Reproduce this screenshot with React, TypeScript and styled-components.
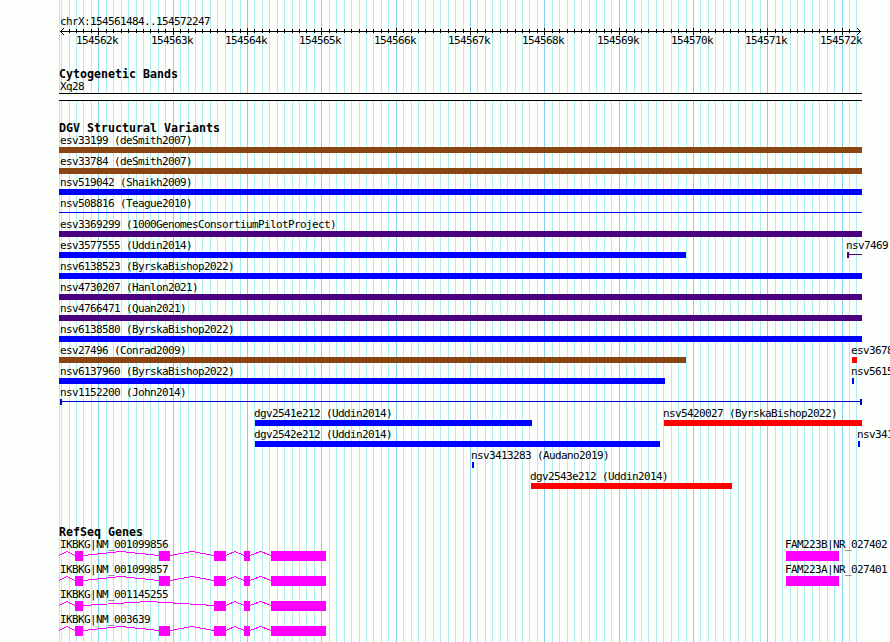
import React from "react";
import styled, { createGlobalStyle } from "styled-components";

const GlobalStyle = createGlobalStyle`
  html, body { margin: 0; padding: 0; background: #fdfffc; overflow: hidden; }
`;

const BLUE = "#0000ff";
const BROWN = "#8b4513";
const INDIGO = "#4b0082";
const RED = "#ff0000";
const MAGENTA = "#ff00ff";
const MEDIUM_BLUE = "#0000cd";

const LEFT = 59;
const RIGHT = 862;
const REGION_START = 154561484;
const REGION_END = 154572247;

const toX = (bp: number) =>
  Math.round(60 + ((bp - REGION_START) * 800) / (REGION_END - REGION_START));

const ticks: { x: number; major: boolean; label: string }[] = [];
for (let bp = 154561500; bp <= 154572200; bp += 100) {
  ticks.push({ x: bp === 154572200 ? 856 : toX(bp), major: bp % 1000 === 0, label: `${bp / 1000}k` });
}

const Browser = styled.main`
  display: grid;
  width: 890px;
  height: 642px;
  overflow: hidden;
  background: #fdfffc;
  color: #000;
  font-family: "DejaVu Sans Mono", "Liberation Mono", monospace;
`;

const GridLines = styled.svg`
  grid-area: 1 / 1;
  display: block;
`;

const Tracks = styled.div`
  grid-area: 1 / 1;
  display: flex;
  flex-direction: column;
  padding-top: 15px;
  min-width: 0;
`;

const Track = styled.section<{ $gap: number }>`
  display: flex;
  flex-direction: column;
  margin-top: ${(p) => p.$gap}px;
`;

const Heading = styled.h2`
  margin: 0 0 0 ${LEFT}px;
  height: 12px;
  font-size: 11.63px;
  line-height: 13px;
  font-weight: 700;
  white-space: pre;
`;

const Label = styled.div<{ $x: number }>`
  margin-left: ${(p) => p.$x}px;
  height: 13px;
  font-size: 11px;
  line-height: 13px;
  letter-spacing: -0.6225px;
  white-space: pre;
`;

const Lane = styled.div<{ $height: number }>`
  display: grid;
  grid-template-columns: 890px;
  height: ${(p) => p.$height}px;
`;

const Feature = styled.div`
  grid-area: 1 / 1;
`;

const Bar = styled.div<{ $from: number; $to: number; $color: string; $height?: number }>`
  margin-left: ${(p) => p.$from}px;
  width: ${(p) => p.$to - p.$from}px;
  height: ${(p) => p.$height ?? 6}px;
  background: ${(p) => p.$color};
`;

const Span = styled.div<{ $from: number; $to: number; $color: string; $caps: string }>`
  box-sizing: border-box;
  margin-left: ${(p) => p.$from}px;
  width: ${(p) => p.$to - p.$from}px;
  height: 6px;
  border: 0 solid ${(p) => p.$color};
  border-left-width: ${(p) => (p.$caps.includes("l") ? 2 : 0)}px;
  border-right-width: ${(p) => (p.$caps.includes("r") ? 2 : 0)}px;
  background: linear-gradient(${(p) => p.$color}, ${(p) => p.$color}) 0 2px / 100% 1px no-repeat;
`;

const CytoBand = styled.div`
  box-sizing: border-box;
  margin-left: ${LEFT}px;
  width: ${RIGHT - LEFT}px;
  height: 8px;
  border: solid #000;
  border-width: 1px 0;
  background: #fdfffc;
`;

const Axis = styled.svg`
  display: block;
  width: 890px;
  height: 6px;
  overflow: visible;
`;

const Scale = styled.div`
  display: grid;
  grid-template-columns: 890px;
  height: 13px;
`;

const ScaleLabel = styled(Label)`
  grid-area: 1 / 1;
`;

const GeneDrawing = styled.svg`
  display: block;
  width: 890px;
  height: 10px;
`;

type Variant = {
  name: string;
  from: number;
  to: number;
  color: string;
  caps?: string;
};

const full = (name: string, color: string, to = RIGHT): Variant => ({ name, from: LEFT, to, color });

const variants: Variant[][] = [
  [full("esv33199 (deSmith2007)", BROWN)],
  [full("esv33784 (deSmith2007)", BROWN)],
  [full("nsv519042 (Shaikh2009)", BLUE)],
  [{ ...full("nsv508816 (Teague2010)", BLUE), caps: "none" }],
  [full("esv3369299 (1000GenomesConsortiumPilotProject)", INDIGO)],
  [
    full("esv3577555 (Uddin2014)", BLUE, 686),
    { name: "nsv7469", from: 847, to: RIGHT, color: INDIGO, caps: "l" },
  ],
  [full("nsv6138523 (ByrskaBishop2022)", BLUE)],
  [full("nsv4730207 (Hanlon2021)", INDIGO)],
  [full("nsv4766471 (Quan2021)", INDIGO)],
  [full("nsv6138580 (ByrskaBishop2022)", BLUE)],
  [
    full("esv27496 (Conrad2009)", BROWN, 686),
    { name: "esv3678", from: 852, to: 857, color: RED },
  ],
  [
    full("nsv6137960 (ByrskaBishop2022)", BLUE, 665),
    { name: "nsv5615", from: 852, to: 854, color: BLUE },
  ],
  [{ name: "nsv1152200 (John2014)", from: 60, to: RIGHT, color: MEDIUM_BLUE, caps: "lr" }],
  [
    { name: "dgv2541e212 (Uddin2014)", from: 255, to: 532, color: BLUE },
    { name: "nsv5420027 (ByrskaBishop2022)", from: 664, to: RIGHT, color: RED },
  ],
  [
    { name: "dgv2542e212 (Uddin2014)", from: 255, to: 660, color: BLUE },
    { name: "nsv341", from: 858, to: 860, color: BLUE },
  ],
  [{ name: "nsv3413283 (Audano2019)", from: 472, to: 474, color: BLUE }],
  [{ name: "dgv2543e212 (Uddin2014)", from: 531, to: 732, color: RED }],
];

const allExons = [[75, 83], [159, 170], [214, 226], [244, 250], [271, 326]];
const shortExons = allExons.filter(([start]) => start !== 159);

const genes = [
  { name: "IKBKG|NM_001099856", exons: allExons, other: "FAM223B|NR_027402" },
  { name: "IKBKG|NM_001099857", exons: allExons, other: "FAM223A|NR_027401" },
  { name: "IKBKG|NM_001145255", exons: shortExons },
  { name: "IKBKG|NM_003639", exons: allExons },
];

function intronPath(exons: number[][]) {
  let start = LEFT;
  return exons
    .map(([from, to]) => {
      const d = `M${start} 4.5L${(start + from) / 2} 0.5L${from} 4.5`;
      start = to;
      return d;
    })
    .join("");
}

function Gene({ exons }: { exons: number[][] }) {
  return (
    <GeneDrawing viewBox="0 0 890 10" shapeRendering="crispEdges">
      <path d={intronPath(exons)} fill="none" stroke={MAGENTA} />
      {exons.map(([from, to]) => (
        <rect key={from} x={from} y={0} width={to - from} height={10} fill={MAGENTA} />
      ))}
    </GeneDrawing>
  );
}

function VariantFeature({ v }: { v: Variant }) {
  return (
    <Feature>
      <Label $x={Math.max(60, v.from - 1)}>{v.name}</Label>
      {v.caps ? (
        <Span $from={v.from} $to={v.to} $color={v.color} $caps={v.caps === "none" ? "" : v.caps} />
      ) : (
        <Bar $from={v.from} $to={v.to} $color={v.color} />
      )}
    </Feature>
  );
}

export default function App() {
  return (
    <>
      <GlobalStyle />
      <Browser>
        <GridLines width="890" height="642" shapeRendering="crispEdges">
          <rect x={LEFT} y={0} width={1} height={642} fill="#afeeee" />
          {ticks.map((t) => (
            <rect key={t.label} x={t.x} y={0} width={1} height={642} fill={t.major ? "#87ceeb" : "#afeeee"} />
          ))}
        </GridLines>
        <Tracks>
          <Label $x={60}>chrX:154561484..154572247</Label>
          <Axis viewBox="0 0 890 6" shapeRendering="crispEdges">
            <rect x={60} y={3} width={801} height={1} />
            <path d="M61 2h1v1h-1zM62 1h1v1h-1zM63 0h1v1h-1zM61 4h1v1h-1zM62 5h1v1h-1zM63 6h1v1h-1z" />
            <path d="M859 2h1v1h-1zM858 1h1v1h-1zM857 0h1v1h-1zM859 4h1v1h-1zM858 5h1v1h-1zM857 6h1v1h-1z" />
            {ticks
              .filter((t) => t.x > 65 && t.x < 856)
              .map((t) => (
                <rect key={t.label} x={t.x} y={t.major ? 0 : 1} width={1} height={t.major ? 7 : 4} />
              ))}
          </Axis>
          <Scale>
            {ticks
              .filter((t) => t.major)
              .map((t) => (
                <ScaleLabel key={t.label} $x={t.x - 22}>{t.label}</ScaleLabel>
              ))}
          </Scale>

          <Track $gap={21}>
            <Heading>Cytogenetic Bands</Heading>
            <Label $x={60}>Xq28</Label>
            <CytoBand />
          </Track>

          <Track $gap={21}>
            <Heading>DGV Structural Variants</Heading>
            {variants.map((lane, i) => (
              <Lane key={i} $height={21}>
                {lane.map((v) => (
                  <VariantFeature key={v.name} v={v} />
                ))}
              </Lane>
            ))}
          </Track>

          <Track $gap={35}>
            <Heading>RefSeq Genes</Heading>
            {genes.map((g) => (
              <Lane key={g.name} $height={25}>
                <Feature>
                  <Label $x={60}>{g.name}</Label>
                  <Gene exons={g.exons} />
                </Feature>
                {g.other && (
                  <Feature>
                    <Label $x={785}>{g.other}</Label>
                    <Bar $from={786} $to={839} $color={MAGENTA} $height={10} />
                  </Feature>
                )}
              </Lane>
            ))}
          </Track>
        </Tracks>
      </Browser>
    </>
  );
}
